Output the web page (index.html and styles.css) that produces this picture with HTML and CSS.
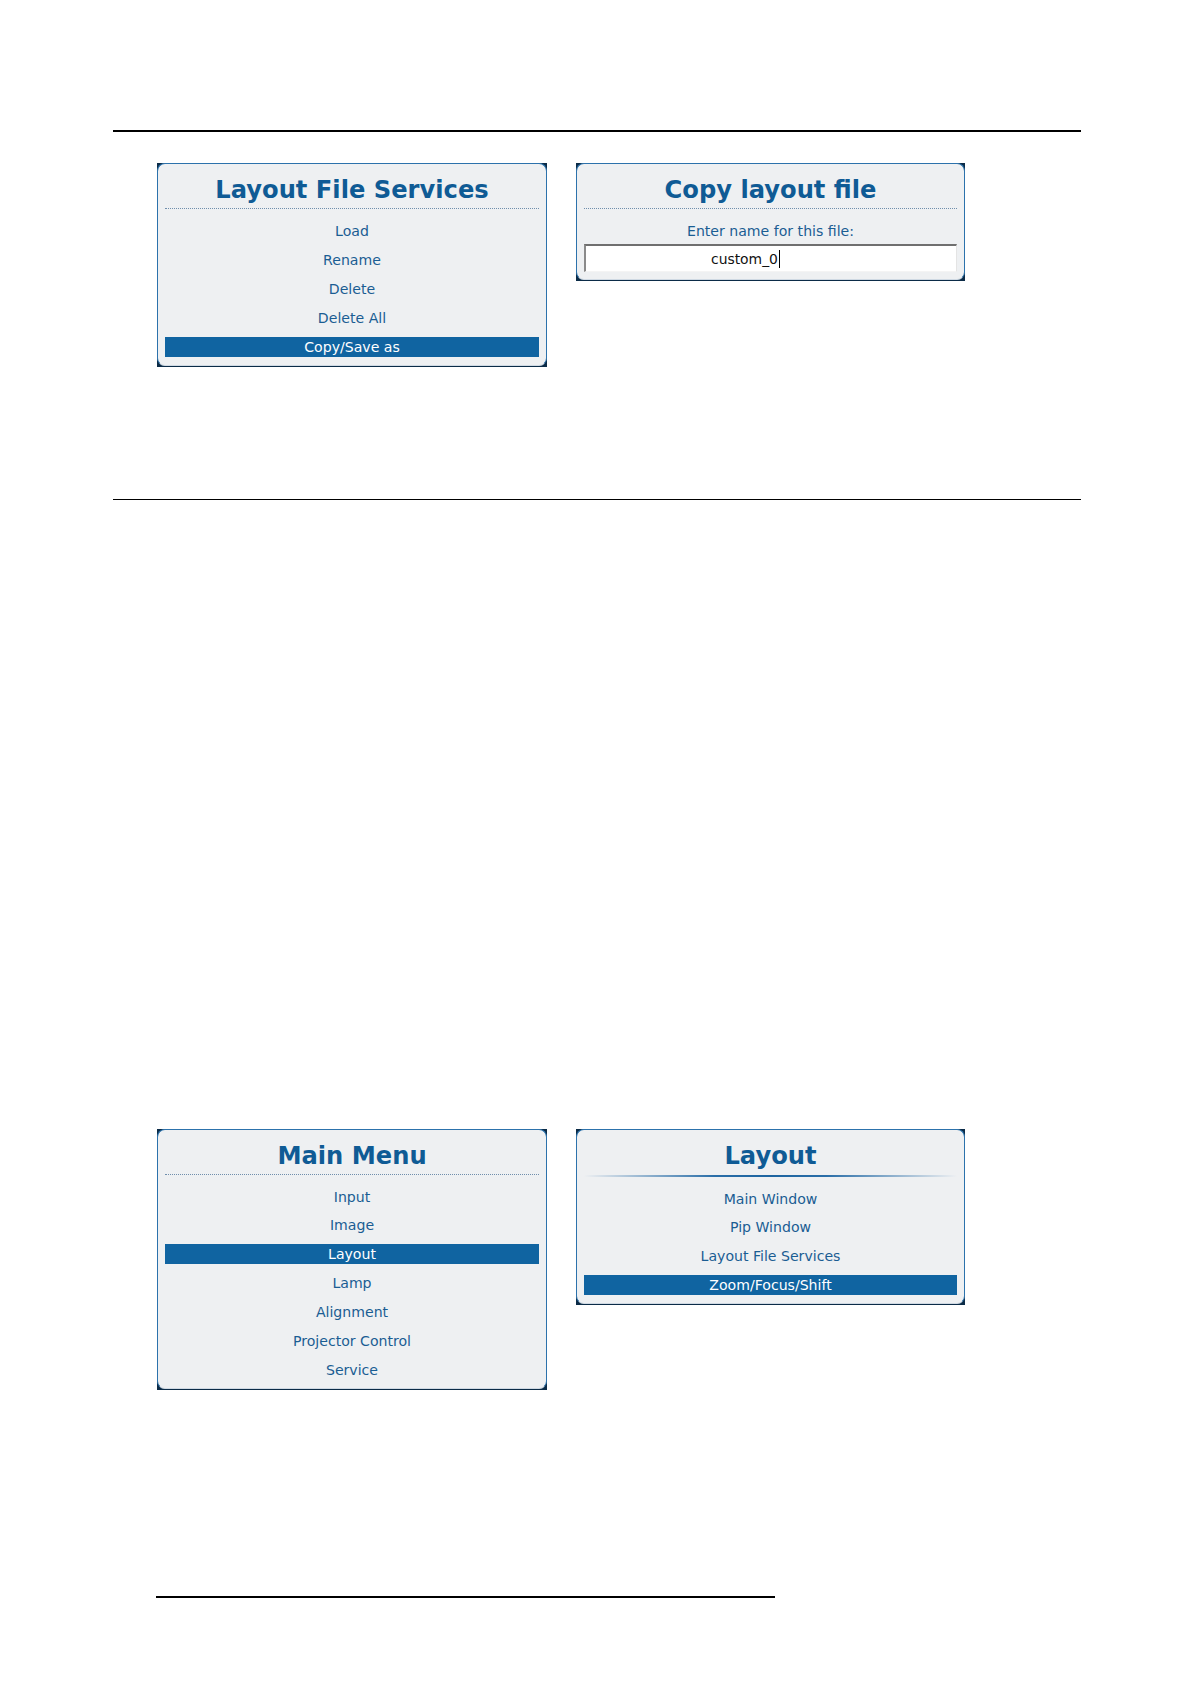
FILE: index.html
```html
<!DOCTYPE html>
<html lang="en">
<head>
<meta charset="utf-8">
<title>Layout File Services</title>
<link rel="stylesheet" href="styles.css">
</head>
<body>
<div class="page">
  <div class="rule rule-top"></div>

  <div class="figure-row row-one">
    <div class="panel panel-wide">
      <div class="panel-inner">
        <div class="title">Layout File Services</div>
        <div class="sep-dotted"></div>
        <div class="list">
          <div class="item">Load</div>
          <div class="item">Rename</div>
          <div class="item">Delete</div>
          <div class="item">Delete All</div>
          <div class="item item-selected">Copy/Save as</div>
        </div>
      </div>
    </div>

    <div class="panel panel-narrow">
      <div class="panel-inner panel-inner-input">
        <div class="title">Copy layout file</div>
        <div class="sep-dotted"></div>
        <div class="list">
          <div class="item">Enter name for this file:</div>
        </div>
        <div class="input-field"><span class="input-text">custom_0</span><span class="caret"></span></div>
      </div>
    </div>
  </div>

  <div class="rule rule-mid"></div>

  <div class="figure-row row-two">
    <div class="panel panel-wide">
      <div class="panel-inner">
        <div class="title">Main Menu</div>
        <div class="sep-dotted"></div>
        <div class="list">
          <div class="item">Input</div>
          <div class="item">Image</div>
          <div class="item item-selected">Layout</div>
          <div class="item">Lamp</div>
          <div class="item">Alignment</div>
          <div class="item">Projector Control</div>
          <div class="item">Service</div>
        </div>
      </div>
    </div>

    <div class="panel panel-narrow">
      <div class="panel-inner">
        <div class="title">Layout</div>
        <div class="sep-solid"></div>
        <div class="list">
          <div class="item">Main Window</div>
          <div class="item">Pip Window</div>
          <div class="item">Layout File Services</div>
          <div class="item item-selected">Zoom/Focus/Shift</div>
        </div>
      </div>
    </div>
  </div>

  <div class="rule rule-bottom"></div>
</div>
</body>
</html>
```

FILE: styles.css
```css
html, body {
  margin: 0;
  padding: 0;
  background: #ffffff;
}

body {
  font-family: "DejaVu Sans", Verdana, sans-serif;
  width: 1190px;
  height: 1684px;
  overflow: hidden;
}

.page {
  padding-top: 130px;
}

.rule {
  background: #000000;
}

.rule-top {
  margin-left: 113px;
  width: 968px;
  height: 2px;
}

.rule-mid {
  margin-left: 113px;
  width: 968px;
  height: 1px;
  margin-top: 132px;
}

.rule-bottom {
  margin-left: 156px;
  width: 619px;
  height: 2px;
  margin-top: 206px;
}

.figure-row {
  display: flex;
  align-items: flex-start;
  gap: 29px;
  margin-left: 157px;
}

.row-one {
  margin-top: 31px;
}

.row-two {
  margin-top: 629px;
}

.panel {
  background: #0b2b47;
  padding: 0 0 1px 0;
  box-sizing: border-box;
}

.panel-wide {
  width: 390px;
}

.panel-narrow {
  width: 389px;
}

.panel-inner {
  background: #eef0f2;
  border: 1px solid #2c72ac;
  border-bottom-color: #cfd9e3;
  border-radius: 8px;
  padding: 12px 7px 8px 7px;
}

.panel-inner-input {
  padding-bottom: 7px;
}

.title {
  font-family: "DejaVu Sans", Verdana, sans-serif;
  font-weight: 700;
  font-size: 24.2px;
  line-height: 28px;
  height: 28px;
  text-align: center;
  color: #0f5b95;
  white-space: nowrap;
}

.sep-dotted {
  margin-top: 4px;
  border-top: 1px dotted #6f8eac;
}

.sep-solid {
  margin-top: 5px;
  height: 2px;
  background: linear-gradient(to right, rgba(40, 110, 170, 0) 0%, #2a6ea8 35%, #1d64a0 50%, #2a6ea8 65%, rgba(40, 110, 170, 0) 100%);
}

.list {
  display: flex;
  flex-direction: column;
  gap: 8.9px;
  padding-top: 12px;
}

.item {
  height: 20px;
  line-height: 20px;
  font-size: 14.1px;
  text-align: center;
  color: #1a5d93;
  white-space: nowrap;
}

.item-selected {
  background: #1064a1;
  color: #ffffff;
}

.input-field {
  margin-top: 3px;
  height: 28px;
  box-sizing: border-box;
  background: #ffffff;
  border-top: 2px solid #6f6f6f;
  border-left: 2px solid #8a8a8a;
  border-right: 1px solid #e4e4e4;
  border-bottom: 1px solid #f4f4f4;
  padding-left: 125px;
  display: flex;
  align-items: center;
  font-size: 13.9px;
  color: #111111;
}

.input-text {
  line-height: 20px;
}

.caret {
  display: inline-block;
  width: 1px;
  height: 18px;
  background: #000000;
  margin-left: 1px;
}
```
